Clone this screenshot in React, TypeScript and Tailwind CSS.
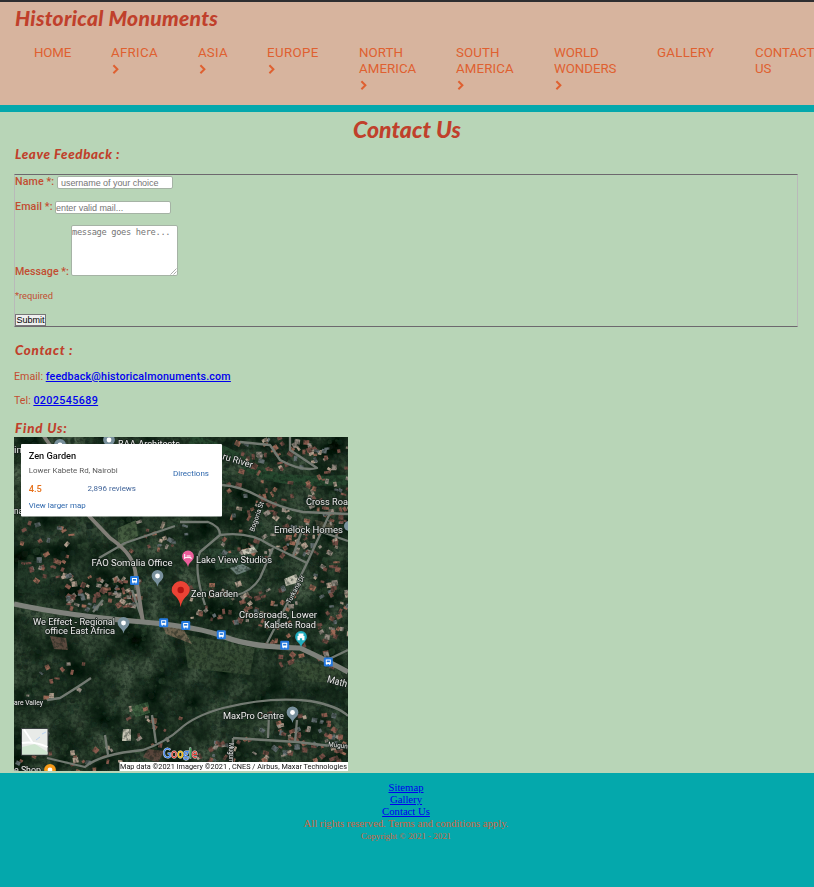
import React from "react";

const navItems = [
  { lines: ["HOME"], width: "w-[37px]", tracking: "tracking-[-0.15px]", arrow: false },
  { lines: ["AFRICA"], width: "w-[47px]", tracking: "tracking-[0.3px]", arrow: true },
  { lines: ["ASIA"], width: "w-[29px]", tracking: "tracking-[0.2px]", arrow: true },
  { lines: ["EUROPE"], width: "w-[52px]", tracking: "tracking-[0.35px]", arrow: true },
  { lines: ["NORTH", "AMERICA"], width: "w-[57px]", tracking: "tracking-[0.05px]", arrow: true },
  { lines: ["SOUTH", "AMERICA"], width: "w-[58px]", tracking: "tracking-[0.1px]", arrow: true },
  { lines: ["WORLD", "WONDERS"], width: "w-[63px]", tracking: "tracking-[-0.05px]", arrow: true },
  { lines: ["GALLERY"], width: "w-[58px]", tracking: "tracking-[0.25px]", arrow: false },
  { lines: ["CONTACT", "US"], width: "w-[60px]", tracking: "tracking-[0px]", arrow: false },
];

const script = "font-['Lato',sans-serif] font-black italic text-[#c0402b] whitespace-nowrap";

function Header() {
  return (
    <header className="h-[112px] overflow-hidden border-t-2 border-b-[7px] border-t-[#2e2e30] border-b-[#04a8ac] bg-[#d7b49e]">
      <h1 className={`${script} ml-[15px] h-[43px] pt-[3px] text-[21px] leading-[25px] tracking-[0.3px]`}>
        Historical Monuments
      </h1>
      <nav className="flex gap-10 pl-[34px] text-[13.3px] leading-4 text-[#df6030]">
        {navItems.map((item) => (
          <a key={item.lines.join(" ")} className={`${item.width} ${item.tracking} shrink-0 whitespace-nowrap`}>
            {item.lines.map((line) => (
              <span key={line} className="block">{line}</span>
            ))}
            {item.arrow && (
              <svg viewBox="0 0 10 16" className="block h-4 w-[10px]" fill="none" stroke="currentColor" strokeWidth="2">
                <path d="M2.4 4.2 L6.4 8.2 L2.4 12.2" />
              </svg>
            )}
          </a>
        ))}
      </nav>
    </header>
  );
}

function Feedback() {
  return (
    <form className="mx-auto flex h-[153px] w-[784px] -translate-x-px flex-col border border-x-[#b9b9b9] border-y-[#6d686e] text-[10.7px] leading-[14px] text-[#c24d31]">
      <label className="flex h-[25px] items-start">
        <span className="w-[42px] font-medium tracking-[0.1px] whitespace-nowrap">Name *:</span>
        <input className="mt-[1px] h-[13px] w-[116px] rounded-[2px] border border-[#a5b3a5] bg-white pl-[3px] font-['Liberation_Sans',sans-serif] text-[9px] tracking-[-0.05px] placeholder:text-[#757575]" placeholder="username of your choice" />
      </label>
      <label className="flex h-[25px] items-start">
        <span className="w-[40px] font-medium tracking-[0.1px] whitespace-nowrap">Email *:</span>
        <input className="mt-[1px] h-[13px] w-[116px] rounded-[2px] border border-[#a5b3a5] bg-white font-['Liberation_Sans',sans-serif] text-[9px] tracking-[-0.05px] placeholder:text-[#757575]" placeholder="enter valid mail..." />
      </label>
      <label className="flex h-[65px] items-start">
        <span className="mt-[40px] w-[56px] font-medium whitespace-nowrap">Message *:</span>
        <span className="relative block h-[51px] w-[107px]">
          <textarea className="block h-[51px] w-[107px] resize-none rounded-[2px] border border-[#a5b3a5] bg-white font-['DejaVu_Sans_Mono',monospace] text-[8.7px] leading-[12px] tracking-[-0.32px] placeholder:text-[#757575]" placeholder="message goes here..." />
          <svg viewBox="0 0 7 7" className="absolute right-[1px] bottom-[1px] h-[7px] w-[7px]" fill="none" stroke="#999" strokeWidth=".8">
            <path d="M.5 6.5l6-6M3.5 6.5l3-3" />
          </svg>
        </span>
      </label>
      <p className="h-[24px] text-[9.3px] leading-[12px]">*required</p>
      <button className="h-[12px] w-[31px] border border-[#777] bg-[#efefef] font-['Liberation_Sans',sans-serif] text-[9px] leading-[10px] text-black">Submit</button>
    </form>
  );
}

/* Deterministic generator keeps the map's houses and trees stable between renders. */
function generator(seed: number) {
  let s = seed;
  return () => {
    s = (s * 16807) % 2147483647;
    return s / 2147483647;
  };
}

const settlements = [
  [20, 520, 50, 60, 34], [22, 447, 100, 20, 12], [65, 575, 75, 32, 75], [130, 520, 55, 30, 18],
  [235, 437, 80, 33, 45], [305, 440, 42, 75, 40], [225, 480, 65, 35, 32], [290, 505, 55, 50, 40],
  [222, 525, 75, 32, 28], [185, 578, 65, 44, 34], [310, 560, 38, 75, 40], [245, 585, 50, 40, 30],
  [20, 655, 65, 42, 12], [120, 705, 60, 40, 14], [195, 738, 65, 30, 30], [260, 712, 86, 52, 70],
  [65, 745, 60, 24, 14], [262, 632, 70, 32, 18], [15, 725, 35, 42, 12],
];
const rnd = generator(4217);
const roofs = ["#8e5d50", "#a16b5a", "#7b5149", "#9a8f86", "#b9a493", "#744d45", "#667174"];
const houses = settlements.flatMap(([x, y, w, h, n]) =>
  Array.from({ length: n }, () => ({
    x: x + rnd() * w, y: y + rnd() * h, w: 2.4 + rnd() * 4, h: 2 + rnd() * 3.8,
    a: -40 + rnd() * 80, c: roofs[Math.floor(rnd() * roofs.length)],
  })),
);
const trees = Array.from({ length: 1600 }, () => ({
  x: 14 + rnd() * 334, y: 437 + rnd() * 334, r: 1 + rnd() * 2.8,
  c: ["#14271e", "#29432e", "#1a3022", "#304a34", "#11221a"][Math.floor(rnd() * 5)],
}));
const clearings = [
  ["M118 528l18-8 2 16-20 14z", "#52694a"], ["M130 707l18-5 2 11-14 4z", "#456e48"],
  ["M183 634l72 14-5 27-62-7z", "#3c5138"], ["M160 620l24 10 8 14-26-10z", "#84705c"],
  ["M50 636l16 2 2 12-14-1z", "#74564c"], ["M148 749l16 2-6 12-15-6z", "#6c4d43"],
  ["M290 661l48 6 8 16-45-2z", "#3b5036"], ["M18 560l35 2-5 32-30-1z", "#213a28"],
  ["M208 548l40 3 12-9-8 22-36 6z", "#34523f"], ["M230 568l12-4 10 5-15 6z", "#819492"],
  ["M315 520l20 4-3 9-14-3z", "#655f4c"],
];
const minorRoads = [
  "M99 558L125 543L175 526", "M222 485Q240 486 260 497T303 512L348 514",
  "M180 522L208 522Q220 526 220 535L200 552Q193 568 205 605",
  "M220 535Q250 531 270 545L307 563", "M330 513L307 563L289 600L267 643",
  "M322 532L348 541", "M273 548L260 578Q252 591 237 595", "M302 530L293 556",
  "M240 442L270 445L280 460Q302 472 317 468L290 450V437",
  "M47 700L60 698Q78 687 91 678", "M47 758L85 767Q100 754 143 750Q166 742 180 729T223 708Q270 696 310 701Q338 706 348 716",
  "M233 738L297 742L348 748M233 738L232 771M268 738L269 715M295 742L297 720",
  "M152 715L156 743M108 755L105 735M143 622L132 590M327 660L348 650M93 612L103 600",
];

type LabelProps = { x: number; y: number; w: number; children: string; size?: number; turn?: number };
function Label({ x, y, w, children, size = 9.3, turn = 0 }: LabelProps) {
  return (
    <text x={x} y={y} textLength={w} lengthAdjust="spacingAndGlyphs" fontSize={size} fill="#ededeb" stroke="#17211c" strokeWidth="1.6" strokeLinejoin="round" paintOrder="stroke" transform={`rotate(${turn} ${x} ${y})`}>
      {children}
    </text>
  );
}

function Pin({ x, y, color = "#78909c", dot = true }: { x: number; y: number; color?: string; dot?: boolean }) {
  return (
    <g transform={`translate(${x} ${y})`}>
      <path d="M0 9.5C-.8 6-2.2 5-4 3.3A5.9 5.9 0 1 1 4 3.3C2.2 5 .8 6 0 9.5Z" fill={color} />
      {dot && <circle r="2.4" cy="-1" fill="#fff" />}
    </g>
  );
}

function Bus({ x, y }: { x: number; y: number }) {
  return (
    <g transform={`translate(${x - 4.5} ${y - 4.5})`}>
      <rect width="9" height="9" rx="1.3" fill="#2479df" />
      <path d="M2 2h5v4.6H6.4V7.5H5.5V6.6H3.5V7.5H2.6V6.6H2z" fill="#fff" />
      <path d="M2.9 3h3.2v1.7H2.9z" fill="#2479df" />
    </g>
  );
}

function SatelliteMap() {
  return (
    <svg viewBox="14 437 334 334" className="block h-[334px] w-[334px] font-['Roboto',sans-serif]">
      <defs>
        <filter id="canopy" x="0" y="0" width="100%" height="100%" colorInterpolationFilters="sRGB">
          <feTurbulence type="fractalNoise" baseFrequency=".035" numOctaves="5" seed="8" />
          <feColorMatrix values=".45 0 0 0 -.1  .45 0 0 0 -.02  .4 0 0 0 -.06  0 0 0 0 1" />
        </filter>
        <filter id="grain" x="0" y="0" width="100%" height="100%" colorInterpolationFilters="sRGB">
          <feTurbulence type="fractalNoise" baseFrequency=".28" numOctaves="3" seed="3" />
          <feColorMatrix values="0 0 0 0 .05  0 0 0 0 .1  0 0 0 0 .07  4 0 0 0 -1.7" />
        </filter>
        <filter id="soften"><feGaussianBlur stdDeviation=".65" /></filter>
      </defs>
      <rect x="14" y="437" width="334" height="334" filter="url(#canopy)" />
      <g filter="url(#soften)">
        {trees.map((t, i) => <circle key={i} cx={t.x} cy={t.y} r={t.r} fill={t.c} opacity=".5" />)}
        <path d="M190 439Q230 450 250 467T348 480" fill="none" stroke="#27472f" strokeWidth="10" />
        {clearings.map(([d, c]) => <path key={d} d={d} fill={c} opacity=".75" />)}
        {houses.map((h, i) => <rect key={i} x={h.x} y={h.y} width={h.w} height={h.h} fill={h.c} opacity=".95" transform={`rotate(${h.a} ${h.x} ${h.y})`} />)}
        <path d="M123 729h8v12h-9zM242 550l12-3 4 5-14 3zM284 579l12-5 4 8-14 4z" fill="#c6c4b4" />
      </g>
      <rect x="14" y="437" width="334" height="334" filter="url(#grain)" opacity=".42" />
      <g fill="none" stroke="#737a72" strokeLinejoin="round" filter="url(#soften)">
        {minorRoads.map((d) => <path key={d} d={d} strokeWidth="2.3" />)}
        <path d="M43 435L57 455Q70 490 90 517L110 538Q132 553 135 570L143 622" strokeWidth="3.8" stroke="#817e77" />
        <path d="M14 604Q70 616 143 622Q200 627 225 637T300 648Q326 660 348 672" strokeWidth="5.2" stroke="#7f827b" />
      </g>

      <Pin x={109} y={441} /><Pin x={60} y={446} />
      <Label x={118} y={447} w={62}>BAA Architects</Label>
      <Label x={14} y={453} w={8}>in</Label>
      <Label x={14} y={514} w={9}>na</Label>
      <Label x={222} y={459} w={31} turn={17}>ru River</Label>
      <Label x={306} y={505} w={42}>Cross Roa</Label>
      <Label x={274} y={533} w={69}>Emelock Homes</Label>
      <circle cx="349" cy="526" r="5" fill="#78909c" />
      <Label x={254} y={532} w={31} size={7} turn={-71}>Bogoria St</Label>
      <Label x={290} y={604} w={31} size={7} turn={-61}>Turkana Dr</Label>
      <Label x={196} y={563} w={76}>Lake View Studios</Label>
      <Label x={91.5} y={566} w={81}>FAO Somalia Office</Label>
      <Label x={191} y={597} w={47}>Zen Garden</Label>
      <Label x={33} y={625} w={82}>We Effect - Regional</Label>
      <Label x={45} y={634} w={70}>office East Africa</Label>
      <Label x={239} y={618} w={78}>Crossroads, Lower</Label>
      <Label x={264} y={627.5} w={52}>Kabete Road</Label>
      <Label x={14} y={704.5} w={29} size={7}>are Valley</Label>
      <Label x={223} y={718.5} w={61}>MaxPro Centre</Label>
      <Label x={326.5} y={682} w={20.5} size={10} turn={15}>Math</Label>
      <Label x={328} y={746.5} w={19.5} size={7} turn={6}>Mugun</Label>
      <Label x={229} y={743} w={20} size={7} turn={90}>Mugum</Label>
      <Label x={14} y={772.5} w={27}>e Shop</Label>
      <Pin x={157.5} y={577} /><Pin x={123.5} y={624} /><Pin x={292.5} y={713.5} />
      <Pin x={50} y={771} color="#f59b19" />
      <Pin x={188} y={557.5} color="#ec5e9b" dot={false} />
      <path d="M184.7 554v5M184.7 557.6h6.4v1.6M186.6 556h4" fill="none" stroke="#fff" strokeWidth="1" />
      <Pin x={301} y={638} color="#20adbd" dot={false} />
      <path d="M297.5 640.2v-4.2h1v-2.5h5v2.5h1v4.2h-2.4v-2h-2.2v2z" fill="#fff" />
      <path d="M180.7 607C179 595 171.7 596 171.7 590A9 9 0 1 1 189.7 590C189.7 596 182 597 180.7 607Z" fill="#ea4335" />
      <circle cx="180.7" cy="590" r="3.2" fill="#b31412" />
      <Bus x={134.5} y={580.5} /><Bus x={163.7} y={622.7} /><Bus x={185.7} y={625.5} />
      <Bus x={221.3} y={634.7} /><Bus x={284.7} y={645.3} /><Bus x={328.3} y={662} />

      <rect x="21" y="444" width="201" height="72.5" rx="1" fill="#fff" />
      <g fontSize="8" fill="#2f68ad">
        <text x="28.7" y="459" fontSize="9.3" fontWeight="500" fill="#111" textLength="47.5" lengthAdjust="spacingAndGlyphs">Zen Garden</text>
        <text x="28.7" y="473" fill="#5b5b5b" textLength="89" lengthAdjust="spacingAndGlyphs">Lower Kabete Rd, Nairobi</text>
        <text x="173" y="476" textLength="36" lengthAdjust="spacingAndGlyphs">Directions</text>
        <text x="28.7" y="491.5" fontSize="9.3" fontWeight="500" fill="#e7711b" textLength="13">4.5</text>
        <text x="87.5" y="491" fill="#42659a" textLength="48.5" lengthAdjust="spacingAndGlyphs">2,896 reviews</text>
        <text x="28.7" y="508" textLength="57" lengthAdjust="spacingAndGlyphs">View larger map</text>
      </g>

      <rect x="21.5" y="728.5" width="26.5" height="26.5" fill="#e8ebe8" stroke="#3b4142" strokeWidth="1" />
      <path d="M22 747l13-3 12.5 8v2.5H22z" fill="#cfe6d0" />
      <path d="M24 729.5Q31 740 33 743.5M22 743Q34 741 47.5 747" fill="none" stroke="#fff" strokeWidth="1.8" />
      <path d="M36 740l4-3M42 734l4-2" fill="none" stroke="#aacbf5" strokeWidth=".8" />
      <text x="163" y="757.5" fontSize="12.5" fontWeight="500" stroke="#dfe3e6" strokeWidth=".9" paintOrder="stroke" textLength="34.5" lengthAdjust="spacingAndGlyphs" className="font-['Lato',sans-serif]">
        <tspan fill="#4285f4">G</tspan><tspan fill="#ea4335">o</tspan><tspan fill="#fbbc05">o</tspan><tspan fill="#4285f4">g</tspan><tspan fill="#34a853">l</tspan><tspan fill="#ea4335">e</tspan>
      </text>
      <rect x="119.5" y="762" width="228.5" height="9" fill="#fff" />
      <text x="120" y="769" fontSize="7.2" fill="#111" textLength="227" lengthAdjust="spacingAndGlyphs">Map data ©2021 Imagery ©2021 , CNES / Airbus, Maxar Technologies</text>
    </svg>
  );
}

export default function App() {
  return (
    <div className="h-[887px] w-[814px] overflow-hidden bg-[#b8d5b7] font-['Roboto',sans-serif]">
      <Header />
      <main className="flex h-[661px] flex-col">
        <h2 className={`${script} h-[34px] pt-[3px] text-center text-[23px] leading-[28px] tracking-[0.05px]`}>Contact Us</h2>
        <h3 className={`${script} ml-[15px] h-[28px] text-[13.3px] leading-4 tracking-[0.6px]`}>Leave Feedback :</h3>
        <Feedback />
        <h3 className={`${script} mt-[15px] ml-[15px] h-[28px] text-[13.3px] leading-4 tracking-[0.8px]`}>Contact :</h3>
        <div className="ml-[14px] text-[10.7px] leading-[14px] text-[#c24d31]">
          <p className="h-6">Email: <a className="font-medium tracking-[0.19px] text-[#0000ee] underline">feedback@historicalmonuments.com</a></p>
          <p className="h-[26px]">Tel: <a className="font-medium tracking-[0.4px] text-[#0000ee] underline">0202545689</a></p>
        </div>
        <h3 className={`${script} ml-[15px] h-[17px] text-[13.3px] leading-4 tracking-[0.9px]`}>Find Us:</h3>
        <div className="ml-[14px]"><SatelliteMap /></div>
      </main>
      <footer className="flex h-[114px] flex-col items-center bg-[#04a8ac] pt-[8px] pr-[2px] font-['Liberation_Serif',serif] text-[10.7px] leading-[12px] text-[#d0643f]">
        <a className="text-[#0000ee] underline">Sitemap</a>
        <a className="text-[#0000ee] underline">Gallery</a>
        <a className="text-[#0000ee] underline">Contact Us</a>
        <p>All rights reserved. Terms and conditions apply.</p>
        <p className="pt-px text-[8.9px]">Copyright © 2021 - 2021</p>
      </footer>
    </div>
  );
}
